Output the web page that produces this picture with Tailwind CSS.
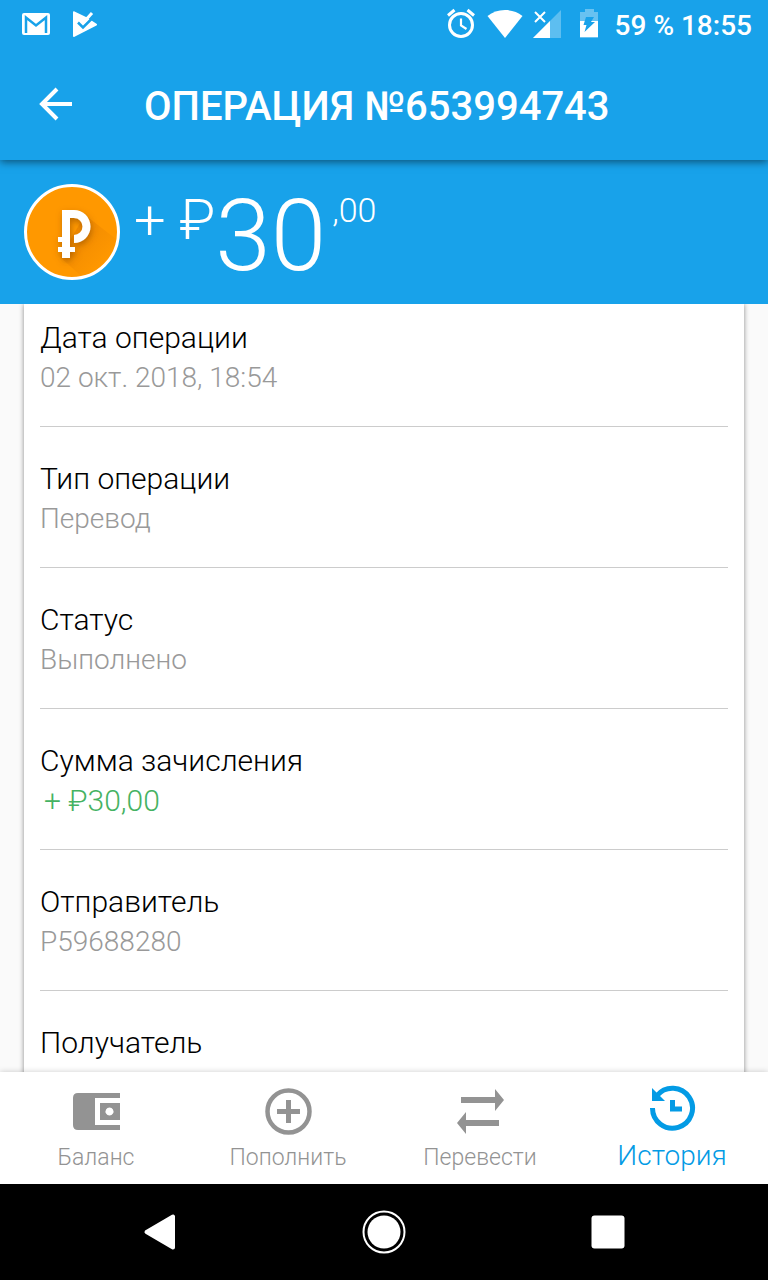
<!DOCTYPE html>
<html lang="ru">

<head>
    <meta charset="UTF-8" />
    <meta name="viewport" content="width=device-width, initial-scale=1.0" />
    <title>Операция №653994743</title>
    <script src="https://cdn.jsdelivr.net/npm/@tailwindcss/browser@4"></script>
</head>

<body class="flex h-screen flex-col overflow-hidden bg-[#fafafa] font-['Roboto',sans-serif] font-light text-black">

    <!-- Header -->
    <header class="relative z-10 bg-[#18a2ea] text-white shadow-[0_2px_8px_rgba(0,0,0,0.5)]">
        <div class="flex h-12 items-center pl-5 pr-4">
            <svg class="size-8" viewBox="0 0 32 32" fill="none">
                <rect x="2" y="5" width="28" height="22" rx="2" fill="#fff" />
                <path d="M6 25V9.500L16 17.500 26 9.500V25" stroke="#18a2ea" stroke-width="2.500" />
            </svg>
            <svg class="ml-4 size-8" viewBox="0 0 32 32" fill="none">
                <path d="M5 4.500v23.500c0 1 .8 1.200 1.500.8L28.500 17.500c.8-.5.8-1.200 0-1.700l-5-3.300L18 9 6.500 3.500C5.700 3 5 3.500 5 4.500z" fill="#fff" />
                <path d="M10 14.500l5 5L26 8.500" stroke="#18a2ea" stroke-width="2.500" />
                <path d="M17 3l4 4" stroke="#18a2ea" stroke-width="2" />
                <path d="M15.500 14.500L24 5" stroke="#fff" stroke-width="3" />
            </svg>

            <svg class="ml-auto size-8" viewBox="0 0 32 32" fill="none" stroke="#fff">
                <circle cx="16" cy="17" r="11.500" stroke-width="3" />
                <path d="M16 10.500v7l5.500 3.500" stroke-width="2.200" />
                <path d="M3 7.500L9.500 2M22.500 2L29 7.500" stroke-width="3" />
            </svg>
            <svg class="ml-2.5 h-8 w-9" viewBox="0 0 36 32" fill="#fff">
                <path d="M.5 8C5.500 4 11 2 18 2s12.500 2 17.500 6L18 30z" />
            </svg>
            <svg class="ml-2 size-8" viewBox="0 0 32 32">
                <path d="M30 2v28H2z" fill="#fff" fill-opacity=".3" />
                <path d="M19 13v17H2z" fill="#fff" />
                <path d="M4 4l10 10M14 4L4 14" stroke="#fff" stroke-width="2" />
            </svg>
            <svg class="ml-2.5 size-8" viewBox="0 0 32 32">
                <path d="M7 4h5V1h9v3h4v26H7z" fill="#fff" fill-opacity=".35" />
                <path d="M7 13h18v16H7z" fill="#fff" />
                <path d="M13 9h8l-3 5h4L11.500 24l2-7H10.500z" fill="#18a2ea" />
            </svg>
            <span class="ml-2.5 pt-1 text-[28px] leading-8 font-medium">59 % 18:55</span>
        </div>

        <div class="flex h-28 items-center gap-16 px-8">
            <button type="button" aria-label="Назад" class="size-12">
                <svg class="size-12" viewBox="0 0 48 48" fill="none" stroke="#fff" stroke-width="4">
                    <path d="M40 24H11M25 9L10 24l15 15" />
                </svg>
            </button>
            <h1 class="pt-1.5 text-[40px] leading-12 font-medium">ОПЕРАЦИЯ №653994743</h1>
        </div>
    </header>

    <!-- Amount -->
    <section class="flex h-36 shrink-0 items-center bg-[#18a2ea] px-6 text-white">
        <svg class="size-24" viewBox="0 0 96 96">
            <defs>
                <linearGradient id="fade" x1="0" y1="0" x2="1" y2="1">
                    <stop offset="0" stop-color="#c86400" stop-opacity=".4" />
                    <stop offset=".8" stop-color="#c86400" stop-opacity="0" />
                </linearGradient>
                <filter id="soft" x="-50%" y="-50%" width="200%" height="200%">
                    <feDropShadow dx="1" dy="3" stdDeviation="3" flood-color="#7a3c00" flood-opacity=".5" />
                </filter>
            </defs>
            <circle cx="48" cy="48" r="46.500" fill="#ff9800" stroke="#fff" stroke-width="3" />
            <path d="M61 31L92 55A45 45 0 0 1 57 92L36 73z" fill="url(#fade)" />
            <path d="M38 26h12a16.500 16.500 0 0 1 0 33v-8a8.500 8.500 0 0 0 0-17h-4v29h5v5h-5v6h-8v-6h-4v-5h4v-5h-4v-5h4z" fill="#fff" filter="url(#soft)" />
        </svg>
        <div class="flex items-start pt-2 pl-3.5">
            <span class="text-[56px] leading-16">+ ₽</span>
            <span class="text-[100px] leading-24">30</span>
            <span class="pl-1.5 text-[34px] leading-11">,00</span>
        </div>
    </section>

    <!-- Details -->
    <main class="min-h-0 flex-1 overflow-hidden px-6">
        <dl class="bg-white px-4 shadow-[0_0_5px_rgba(0,0,0,0.45)]">
            <div class="border-b border-[#cccccc] pt-4 pb-[30px]">
                <dt class="text-[30px] leading-9">Дата операции</dt>
                <dd class="mt-1 text-[28px] leading-9 text-[#999999]">02 окт. 2018, 18:54</dd>
            </div>
            <div class="border-b border-[#cccccc] pt-[34px] pb-[30px]">
                <dt class="text-[30px] leading-9">Тип операции</dt>
                <dd class="mt-1 text-[28px] leading-9 text-[#999999]">Перевод</dd>
            </div>
            <div class="border-b border-[#cccccc] pt-[34px] pb-[30px]">
                <dt class="text-[30px] leading-9">Статус</dt>
                <dd class="mt-1 text-[28px] leading-9 text-[#999999]">Выполнено</dd>
            </div>
            <div class="border-b border-[#cccccc] pt-[34px] pb-[30px]">
                <dt class="text-[30px] leading-9">Сумма зачисления</dt>
                <dd class="mt-1 pl-1 text-[30px] leading-9 text-[#45b262]">+ ₽30,00</dd>
            </div>
            <div class="border-b border-[#cccccc] pt-[34px] pb-[30px]">
                <dt class="text-[30px] leading-9">Отправитель</dt>
                <dd class="mt-1 text-[28px] leading-9 text-[#999999]">P59688280</dd>
            </div>
            <div class="pt-[34px] pb-[30px]">
                <dt class="text-[30px] leading-9">Получатель</dt>
                <dd class="mt-1 text-[28px] leading-9 text-[#999999]">P77888757</dd>
            </div>
        </dl>
    </main>

    <!-- Tabs -->
    <nav class="relative grid h-28 shrink-0 grid-cols-4 bg-white text-[23px] leading-8 text-[#939393] shadow-[0_0_6px_rgba(0,0,0,0.2)]">
        <a href="#balance" class="flex flex-col items-center pt-4">
            <svg class="size-12" viewBox="0 0 48 48" fill="#939393">
                <path d="M6 5h42v5H23v27h25v5H6q-5 0-5-5V10q0-5 5-5z" />
                <path fill-rule="evenodd" d="M28 15h20v17H28zM37.500 19.500a4 4 0 1 0 .01 0z" />
            </svg>
            <span class="mt-1.5">Баланс</span>
        </a>
        <a href="#deposit" class="flex flex-col items-center pt-4">
            <svg class="size-12" viewBox="0 0 48 48" fill="none" stroke="#939393">
                <circle cx="24.500" cy="23.500" r="21" stroke-width="4.500" />
                <path d="M24.500 12v23M13 23.500h23" stroke-width="5" />
            </svg>
            <span class="mt-1.5">Пополнить</span>
        </a>
        <a href="#transfer" class="flex flex-col items-center pt-4">
            <svg class="size-12" viewBox="0 0 48 48" fill="#939393">
                <path d="M5 9h34V1l9 11-9 11v-8H5zM43 38H10v8L1 35l9-11v8h33z" />
            </svg>
            <span class="mt-1.5">Перевести</span>
        </a>
        <a href="#history" class="flex flex-col items-center pt-3 text-[28px] text-[#039be5]">
            <svg class="size-12" viewBox="0 0 48 48" fill="none" stroke="#039be5">
                <path d="M4.500 24A20 20 0 1 0 9 11.500" stroke-width="5" />
                <path d="M4 4l13 13H4z" fill="#039be5" stroke="none" />
                <path d="M24.500 16v9H34" stroke-width="5" />
            </svg>
            <span class="mt-2">История</span>
        </a>
    </nav>

    <!-- System buttons -->
    <footer class="flex h-24 shrink-0 items-center justify-center gap-44 bg-black">
        <button type="button" aria-label="Назад" class="size-12">
            <svg class="size-12" viewBox="0 0 48 48" fill="#fff" stroke="#fff" stroke-width="4" stroke-linejoin="round">
                <path d="M10.500 24L37 8.500v31z" />
            </svg>
        </button>
        <button type="button" aria-label="Домой" class="size-12">
            <svg class="size-12" viewBox="0 0 48 48">
                <circle cx="24" cy="24" r="20.500" fill="none" stroke="#fff" stroke-width="2" />
                <circle cx="24" cy="24" r="16.500" fill="#fff" />
            </svg>
        </button>
        <button type="button" aria-label="Обзор" class="size-12">
            <svg class="size-12" viewBox="0 0 48 48">
                <rect x="7.500" y="7.500" width="33" height="33" rx="3" fill="#fff" />
            </svg>
        </button>
    </footer>

</body>

</html>
